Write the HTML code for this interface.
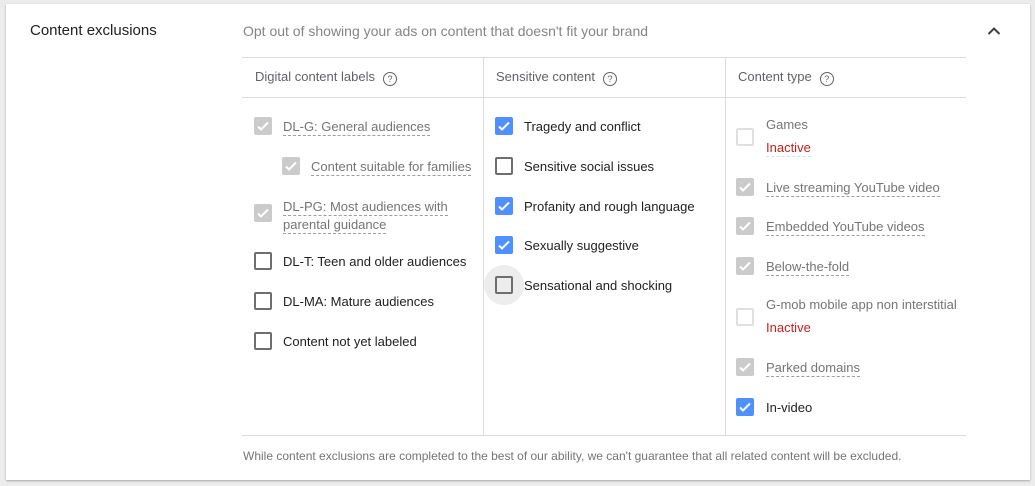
<!DOCTYPE html>
<html><head><style>
body{margin:0;width:1035px;height:486px;background:#ececec;font-family:"Liberation Sans",Arial,sans-serif;position:relative;overflow:hidden}
.card{position:absolute;left:6px;top:4px;width:1024px;height:476px;background:#fff;box-shadow:0 1px 2px rgba(0,0,0,.3)}
.a{position:absolute;white-space:nowrap}
.t{font-size:13px;color:#202124;line-height:16px;margin-top:1px}
.g{color:#757575}
.d{border-bottom:1px dashed #9e9e9e;padding-bottom:1px}
.r{color:#c5221f}
.hl{position:absolute;height:1px;background:#dadce0}
.vl{position:absolute;width:1px;background:#dadce0;top:57px;height:378px}
.cb{position:absolute;width:18px;height:18px;box-sizing:border-box;border-radius:2px}
.on{background:#4d90fe}
.dis{background:#cbcbcb}
.off{border:2px solid #6e6e6e}
.offd{border:2px solid #e0e0e0}
.cb svg{position:absolute;left:2px;top:2px}
.q{display:inline-block;width:12px;height:12px;border:1px solid #5f6368;border-radius:50%;font-size:9px;line-height:12px;text-align:center;color:#5f6368;margin-left:8px;vertical-align:-1px}
.h{font-size:13px;color:#5f6368}
</style></head><body>
<div class="card"></div>
<div class="a" style="left:30px;top:22px;font-size:15px;color:#202124">Content exclusions</div>
<div class="a" style="left:243px;top:23px;font-size:14px;color:#80868b">Opt out of showing your ads on content that doesn't fit your brand</div>
<svg class="a" style="left:987px;top:26px" width="14" height="10" viewBox="0 0 14 10"><path d="M1.5 8 L7 2.5 L12.5 8" stroke="#3c4043" stroke-width="2" fill="none"/></svg>
<div class="hl" style="left:242px;width:724px;top:57px"></div>
<div class="hl" style="left:242px;width:724px;top:97px"></div>
<div class="hl" style="left:242px;width:724px;top:435px"></div>
<div class="vl" style="left:483px"></div>
<div class="vl" style="left:725px"></div>
<div class="a h" style="left:255px;top:69px">Digital content labels<span class="q">?</span></div>
<div class="a h" style="left:496px;top:69px">Sensitive content<span class="q">?</span></div>
<div class="a h" style="left:738px;top:69px">Content type<span class="q">?</span></div>

<!-- left column -->
<div class="cb dis" style="left:254px;top:117px"><svg width="14" height="14"><path d="M2 7.5l3 3 7-7" stroke="#fff" stroke-width="2" fill="none"/></svg></div>
<div class="a t g" style="left:283px;top:118px"><span class="d">DL-G: General audiences</span></div>
<div class="cb dis" style="left:282px;top:157px"><svg width="14" height="14"><path d="M2 7.5l3 3 7-7" stroke="#fff" stroke-width="2" fill="none"/></svg></div>
<div class="a t g" style="left:311px;top:158px"><span class="d">Content suitable for families</span></div>
<div class="cb dis" style="left:254px;top:204px"><svg width="14" height="14"><path d="M2 7.5l3 3 7-7" stroke="#fff" stroke-width="2" fill="none"/></svg></div>
<div class="a t g" style="left:283px;top:197px;line-height:18px"><span class="d">DL-PG: Most audiences with</span><br><span class="d">parental guidance</span></div>
<div class="cb off" style="left:254px;top:252px"></div>
<div class="a t" style="left:283px;top:253px">DL-T: Teen and older audiences</div>
<div class="cb off" style="left:254px;top:292px"></div>
<div class="a t" style="left:283px;top:293px">DL-MA: Mature audiences</div>
<div class="cb off" style="left:254px;top:332px"></div>
<div class="a t" style="left:283px;top:333px">Content not yet labeled</div>

<!-- middle column -->
<div class="a" style="left:484px;top:265px;width:40px;height:40px;border-radius:50%;background:#ededed"></div>
<div class="cb on" style="left:495px;top:117px"><svg width="14" height="14"><path d="M2 7.5l3 3 7-7" stroke="#fff" stroke-width="2" fill="none"/></svg></div>
<div class="a t" style="left:524px;top:118px">Tragedy and conflict</div>
<div class="cb off" style="left:495px;top:157px"></div>
<div class="a t" style="left:524px;top:158px">Sensitive social issues</div>
<div class="cb on" style="left:495px;top:197px"><svg width="14" height="14"><path d="M2 7.5l3 3 7-7" stroke="#fff" stroke-width="2" fill="none"/></svg></div>
<div class="a t" style="left:524px;top:198px">Profanity and rough language</div>
<div class="cb on" style="left:495px;top:236px"><svg width="14" height="14"><path d="M2 7.5l3 3 7-7" stroke="#fff" stroke-width="2" fill="none"/></svg></div>
<div class="a t" style="left:524px;top:237px">Sexually suggestive</div>
<div class="cb off" style="left:495px;top:276px"></div>
<div class="a t" style="left:524px;top:277px">Sensational and shocking</div>

<!-- right column -->
<div class="cb offd" style="left:736px;top:128px"></div>
<div class="a t g" style="left:766px;top:116px">Games</div>
<div class="a t r" style="left:766px;top:139px"><span class="d" style="border-color:#ddd">Inactive</span></div>
<div class="cb dis" style="left:736px;top:178px"><svg width="14" height="14"><path d="M2 7.5l3 3 7-7" stroke="#fff" stroke-width="2" fill="none"/></svg></div>
<div class="a t g" style="left:766px;top:179px"><span class="d">Live streaming YouTube video</span></div>
<div class="cb dis" style="left:736px;top:217px"><svg width="14" height="14"><path d="M2 7.5l3 3 7-7" stroke="#fff" stroke-width="2" fill="none"/></svg></div>
<div class="a t g" style="left:766px;top:218px"><span class="d">Embedded YouTube videos</span></div>
<div class="cb dis" style="left:736px;top:257px"><svg width="14" height="14"><path d="M2 7.5l3 3 7-7" stroke="#fff" stroke-width="2" fill="none"/></svg></div>
<div class="a t g" style="left:766px;top:258px"><span class="d">Below-the-fold</span></div>
<div class="cb offd" style="left:736px;top:308px"></div>
<div class="a t g" style="left:766px;top:296px">G-mob mobile app non interstitial</div>
<div class="a t r" style="left:766px;top:319px">Inactive</div>
<div class="cb dis" style="left:736px;top:358px"><svg width="14" height="14"><path d="M2 7.5l3 3 7-7" stroke="#fff" stroke-width="2" fill="none"/></svg></div>
<div class="a t g" style="left:766px;top:359px"><span class="d">Parked domains</span></div>
<div class="cb on" style="left:736px;top:398px"><svg width="14" height="14"><path d="M2 7.5l3 3 7-7" stroke="#fff" stroke-width="2" fill="none"/></svg></div>
<div class="a t" style="left:766px;top:399px">In-video</div>

<div class="a" style="left:243px;top:449px;font-size:12px;color:#757575">While content exclusions are completed to the best of our ability, we can't guarantee that all related content will be excluded.</div>
</body></html>
